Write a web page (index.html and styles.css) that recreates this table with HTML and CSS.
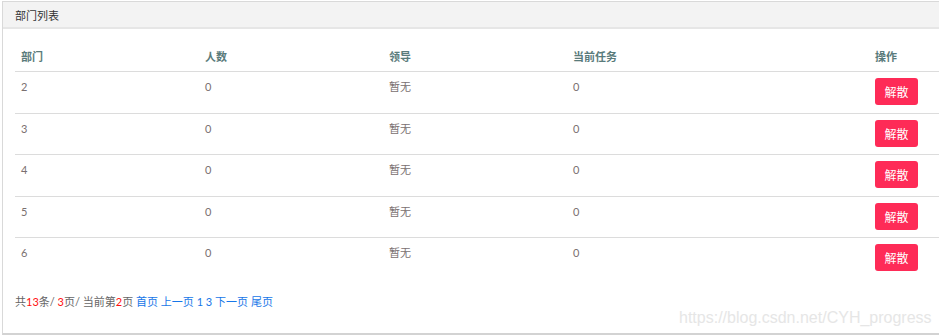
FILE: index.html
```html
<!DOCTYPE html>
<html lang="zh">
<head>
<meta charset="utf-8">
<title>部门列表</title>
<link rel="stylesheet" href="styles.css">
</head>
<body>
<div class="panel">
  <div class="panel-heading">部门列表</div>
  <div class="panel-body">
    <table class="table">
      <colgroup>
        <col class="c1"><col class="c2"><col class="c3"><col class="c4"><col class="c5">
      </colgroup>
      <thead>
        <tr><th>部门</th><th>人数</th><th>领导</th><th>当前任务</th><th>操作</th></tr>
      </thead>
      <tbody>
        <tr><td>2</td><td>0</td><td>暂无</td><td>0</td><td><button class="btn">解散</button></td></tr>
        <tr><td>3</td><td>0</td><td>暂无</td><td>0</td><td><button class="btn">解散</button></td></tr>
        <tr><td>4</td><td>0</td><td>暂无</td><td>0</td><td><button class="btn">解散</button></td></tr>
        <tr><td>5</td><td>0</td><td>暂无</td><td>0</td><td><button class="btn">解散</button></td></tr>
        <tr><td>6</td><td>0</td><td>暂无</td><td>0</td><td><button class="btn">解散</button></td></tr>
      </tbody>
    </table>
    <div class="pager">共<span class="num">13</span>条/ <span class="num">3</span>页/ 当前第<span class="num">2</span>页 <a>首页</a> <a>上一页</a> <a>1</a> <a>3</a> <a>下一页</a> <a>尾页</a></div>
  </div>
  <div class="watermark">https://blog.csdn.net/CYH_progress</div>
</div>
</body>
</html>
```
FILE: styles.css
```css
html, body {
  margin: 0;
  padding: 0;
  background: #fff;
}
body {
  font-family: Lato, "Noto Sans CJK SC", sans-serif;
  font-size: 12px;
  color: #777;
}
.panel {
  position: relative;
  margin: 1px 0 0 2px;
  height: 334px;
  border-top: 1px solid #d9d9d9;
  border-left: 1px solid #d9d9d9;
  border-bottom: 2px solid #d3d3d3;
  box-sizing: border-box;
  background: #fff;
  overflow: hidden;
}
.panel-heading {
  height: 25px;
  line-height: 27px;
  padding-left: 12px;
  background: #f3f3f3;
  border-bottom: 2px solid #e6e6e6;
  color: #333;
  font-size: 11px;
}
.panel-body {
  padding: 13px 0 0 12px;
}
.table {
  border-collapse: collapse;
  table-layout: fixed;
  width: 100%;
}
.c1, .c2, .c3 { width: 184px; }
.c4 { width: 302px; }
.table th {
  text-align: left;
  font-weight: bold;
  color: #5a7b7b;
  font-size: 11px;
  line-height: 18px;
  padding: 6px 6px 5px;
  border-bottom: 1px solid #dcdcdc;
}
.table td {
  line-height: 18px;
  padding: 6px 6px 7.5px;
  border-bottom: 1px solid #dcdcdc;
  vertical-align: top;
  color: #7a7070;
  font-size: 11px;
}
.table tbody tr:last-child td {
  border-bottom: none;
}
.btn {
  width: 43px;
  height: 27px;
  border: none;
  border-radius: 3px;
  background: #fe2b57;
  color: #fff;
  font-family: "Noto Sans CJK SC", sans-serif;
  font-size: 12px;
  padding: 0;
  display: block;
}
.pager {
  margin-top: 14px;
  font-size: 11px;
  line-height: 18px;
  color: #666;
}
.pager .num { color: #f11; }
.pager a { color: #1777e8; }
.watermark {
  position: absolute;
  left: 676px;
  top: 307px;
  font-family: "Liberation Sans", Arial, sans-serif;
  font-size: 16px;
  color: #e6e6e6;
  white-space: nowrap;
}
```
